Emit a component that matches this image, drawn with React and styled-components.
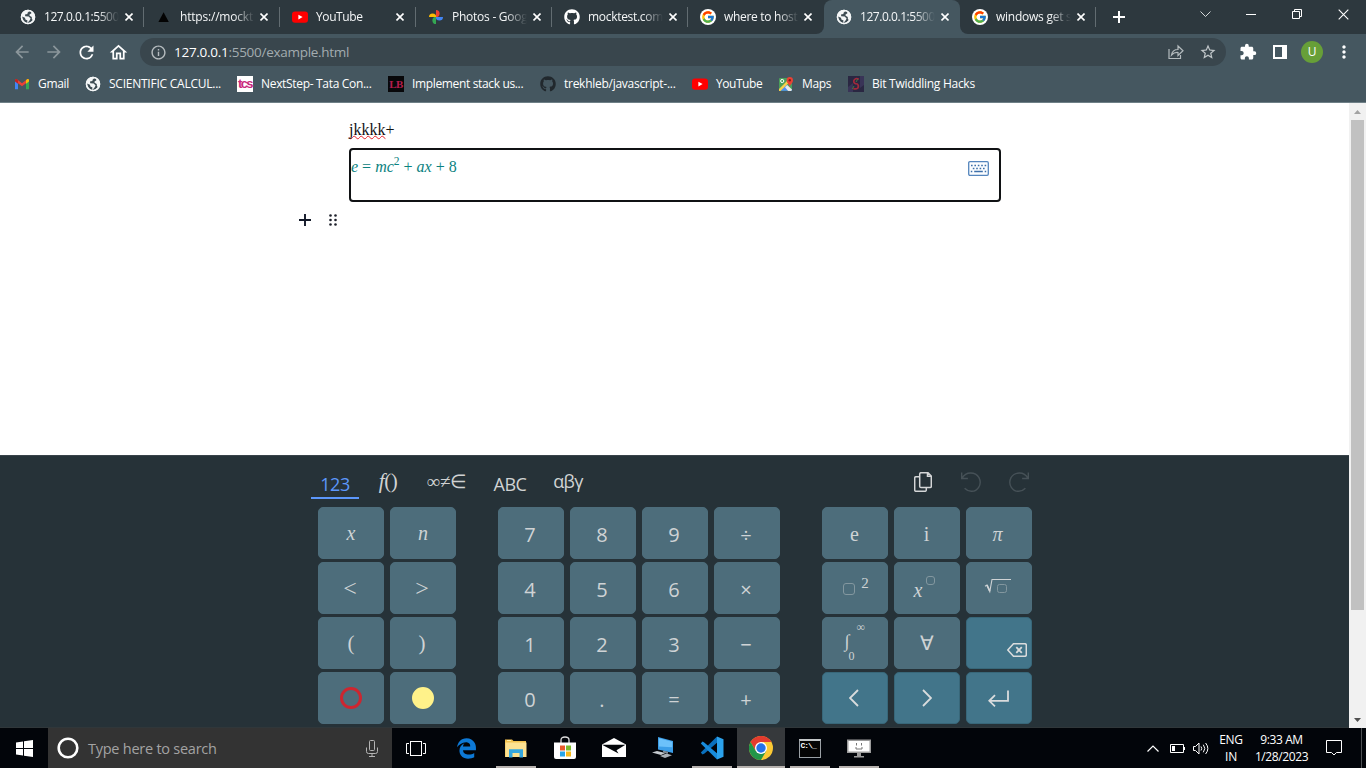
import React from "react";
import styled, { createGlobalStyle } from "styled-components";
import { FaGithub } from "react-icons/fa";
import { FaEdgeLegacy } from "react-icons/fa6";
import { FcGoogle } from "react-icons/fc";
import {
  MdArrowBack, MdArrowForward, MdRefresh, MdOutlineHome, MdInfoOutline,
  MdStarOutline, MdExtension, MdMoreVert,
} from "react-icons/md";

const ui = `"Segoe UI", "Open Sans", "Noto Sans", sans-serif`;
const serif = `"Liberation Serif", serif`;

const GlobalStyle = createGlobalStyle`
  * { box-sizing: border-box; }
  html, body { margin: 0; padding: 0; overflow: hidden; }
  body { font-family: ${ui}; background: #fff; }
  svg { display: block; flex: none; }
`;

const Screen = styled.div`
  width: 1366px;
  height: 768px;
  display: flex;
  flex-direction: column;
  overflow: hidden;
`;

/* ---------- Browser chrome ---------- */

const TabStrip = styled.div`
  height: 34px;
  flex: none;
  display: flex;
  background: #2d383e;
  padding-left: 8px;
`;

const TabSlot = styled.div`
  height: 34px;
  width: 136px;
  background: ${(p) => (p.$curve ? "#455760" : "transparent")};
`;

const TabBody = styled.div`
  display: flex;
  align-items: center;
  width: 136px;
  height: 34px;
  padding-left: 12px;
  background: ${(p) => (p.$active ? "#455760" : "#2d383e")};
  border-radius: ${(p) => p.$radius || "0"};
`;

const FavSlot = styled.div`
  width: 16px;
  height: 16px;
  flex: none;
  display: flex;
  align-items: center;
  justify-content: center;
`;

const TabTitle = styled.div`
  width: 75px;
  margin-left: 8px;
  white-space: nowrap;
  font-size: 12px;
  line-height: 18px;
  letter-spacing: ${(p) => p.$ls || 0}px;
  color: #f4f6f7;
  mask-image: linear-gradient(to right, #000 54px, transparent 75px);
`;

const TabClose = styled.div`
  width: 16px;
  margin-left: 2px;
  display: flex;
  justify-content: center;
`;

const TabDivider = styled.div`
  width: 1px;
  height: 20px;
  margin-left: 7px;
  background: ${(p) => (p.$hidden ? "transparent" : "#626c71")};
`;

const NewTab = styled.div`
  width: 46px;
  display: flex;
  align-items: center;
  justify-content: center;
`;

const WindowButtons = styled.div`
  margin-left: auto;
  display: flex;
  height: 28px;
`;

const WindowButton = styled.div`
  width: 46px;
  display: flex;
  align-items: center;
  justify-content: center;
`;

const Toolbar = styled.div`
  height: 36px;
  flex: none;
  display: flex;
  align-items: center;
  background: #455760;
  padding-left: 6px;
`;

const ToolButton = styled.div`
  width: 32px;
  display: flex;
  justify-content: center;
  color: ${(p) => (p.$dim ? "#8b969b" : "#fff")};
`;

const Omnibox = styled.div`
  width: 1086px;
  height: 28px;
  margin: 0 6px;
  padding: 0 10px;
  border-radius: 14px;
  background: #39464d;
  display: flex;
  align-items: center;
  color: #b6bcbf;
`;

const Url = styled.div`
  flex: 1;
  margin-left: 7px;
  font-size: 13.5px;
  line-height: 20px;
  letter-spacing: -0.28px;
  color: #a3acb0;
  b { font-weight: 400; color: #fff; }
`;

const OmniAction = styled.div`
  width: 32px;
  display: flex;
  justify-content: center;
  color: #c1c7ca;
  &:last-child { margin-right: -8px; }
`;

const Avatar = styled.div`
  width: 22px;
  height: 22px;
  border-radius: 50%;
  background: #679f38;
  color: #fff;
  font: 12px/22px ${ui};
  text-align: center;
`;

const Bookmarks = styled.div`
  height: 33px;
  flex: none;
  display: flex;
  background: #455760;
  border-bottom: 1px solid #6f8087;
  padding: 5px 0 0 14px;
`;

const Bookmark = styled.div`
  display: flex;
  align-items: center;
  height: 18px;
  width: ${(p) => p.$w}px;
  gap: 8px;
  font-size: 12px;
  line-height: 18px;
  white-space: nowrap;
  letter-spacing: ${(p) => p.$ls}px;
  color: #fff;
`;

const BadgeIcon = styled.div`
  width: 16px;
  height: 16px;
  background: ${(p) => p.$bg};
  color: ${(p) => p.$fg};
  font: ${(p) => p.$font};
  letter-spacing: ${(p) => p.$ls || 0}px;
  text-align: center;
`;

/* ---------- Page ---------- */

const Viewport = styled.div`
  height: 625px;
  flex: none;
  display: flex;
  background: #fff;
`;

const PageColumn = styled.div`
  width: 1349px;
  display: flex;
  flex-direction: column;
`;

const Editor = styled.div`
  height: 352px;
  padding: 17px 0 0 349px;
  font-family: ${serif};
`;

const Paragraph = styled.div`
  height: 28px;
  font-size: 16px;
  line-height: 20px;
  color: #111;
  span {
    text-decoration: underline wavy #e8222a 1px;
    text-underline-offset: 0;
    text-decoration-skip-ink: none;
  }
`;

const MathBox = styled.div`
  width: 652px;
  height: 54px;
  border: 2px solid #101214;
  border-radius: 4px;
  display: flex;
  justify-content: space-between;
  padding: 7px 10px 0 0;
  color: #0b8280;
  font-size: 16px;
  line-height: 20px;
`;

const Formula = styled.div`
  white-space: pre;
  sup { font-size: 11.5px; line-height: 0; vertical-align: 7px; }
`;

const BlockTools = styled.div`
  display: flex;
  align-items: center;
  gap: 18px;
  margin: 12px 0 0 -50px;
`;

const Scrollbar = styled.div`
  width: 17px;
  background: #f1f1f1;
  display: flex;
  flex-direction: column;
  align-items: center;
`;

const ScrollArrow = styled.div`
  height: 17px;
  display: flex;
  align-items: center;
`;

const ScrollThumb = styled.div`
  width: 13px;
  height: 490px;
  margin-bottom: auto;
  background: #c1c1c1;
`;

/* ---------- Math keyboard ---------- */

const Keyboard = styled.div`
  height: 273px;
  background: #263238;
  border-top: 1px solid #39434a;
  border-bottom: 1px solid #30373a;
  padding: 0 0 0 311px;
`;

const LayerBar = styled.div`
  display: flex;
  height: 43px;
  margin-bottom: 8px;
`;

const Layer = styled.div`
  width: ${(p) => p.$w}px;
  height: 43px;
  padding-top: ${(p) => p.$top}px;
  margin-right: ${(p) => p.$gap || 0}px;
  font-family: ${(p) => p.$font || ui};
  font-size: ${(p) => p.$size}px;
  line-height: 22px;
  letter-spacing: ${(p) => p.$ls || 0}px;
  white-space: nowrap;
  text-align: center;
  color: ${(p) => (p.$on ? "#5c97fb" : "#d0d2d3")};
  border-bottom: 2px solid ${(p) => (p.$on ? "#5c97fb" : "transparent")};
`;

const EditActions = styled.div`
  display: flex;
  margin-left: auto;
  margin-right: 306px;
  padding-top: 16px;
`;

const EditAction = styled.div`
  width: 48px;
  display: flex;
  justify-content: center;
`;

const KeyGroups = styled.div`
  display: flex;
  gap: 42px;
  padding-left: 7px;
`;

const KeyGrid = styled.div`
  display: grid;
  grid-template-columns: repeat(${(p) => p.$cols}, 66px);
  grid-auto-rows: 52px;
  gap: 3px 6px;
`;

const Key = styled.div`
  display: flex;
  align-items: center;
  justify-content: center;
  border-radius: 5px;
  background: ${(p) => (p.$action ? "#42758a" : "#4d6d7b")};
  border: 1px solid ${(p) => (p.$action ? "#386779" : "#4d6d7b")};
  color: #cfd3d5;
  font-family: ${(p) => (p.$serif ? serif : ui)};
  font-style: ${(p) => (p.$italic ? "italic" : "normal")};
  font-size: ${(p) => p.$size || 20}px;
  line-height: 24px;
  padding-top: ${(p) => p.$down || 0}px;
  padding-bottom: ${(p) => p.$up || 0}px;
  padding-right: ${(p) => p.$back || 0}px;
`;

const Placeholder = styled.span`
  display: block;
  width: ${(p) => p.$s}px;
  height: ${(p) => p.$s}px;
  border: 1px solid #83979f;
  border-radius: 3px;
`;

const Power = styled.div`
  display: flex;
  align-items: flex-end;
  gap: ${(p) => p.$gap}px;
  height: ${(p) => p.$h}px;
  margin-bottom: ${(p) => p.$mb}px;
  margin-left: ${(p) => p.$ml}px;
`;

const Exponent = styled.span`
  align-self: flex-start;
  font-size: 15px;
  line-height: 14px;
`;

const Base = styled.span`
  line-height: 18px;
`;

const Integral = styled.div`
  display: grid;
  grid-template-columns: 12px 12px;
  grid-template-rows: 12px 17px 12px;
  margin: 0 0 1px 3px;
`;

const IntPart = styled.span`
  grid-area: ${(p) => p.$area};
  padding-left: ${(p) => p.$in || 0}px;
  font-size: ${(p) => p.$size || 12}px;
  line-height: ${(p) => p.$lh || 11}px;
`;

const Dot = styled.div`
  width: 22px;
  height: 22px;
  border-radius: 50%;
  border: 3px solid ${(p) => p.$ring};
  background: ${(p) => p.$fill};
`;

/* ---------- Taskbar ---------- */

const Taskbar = styled.div`
  height: 40px;
  flex: none;
  display: flex;
  background: #02050a;
`;

const StartButton = styled.div`
  width: 48px;
  display: flex;
  align-items: center;
  justify-content: center;
`;

const SearchBox = styled.div`
  width: 344px;
  background: #333;
  display: flex;
  align-items: center;
  padding: 0 14px 0 9px;
  color: #a3a3a3;
  font-size: 14.5px;
  letter-spacing: -0.25px;
`;

const SearchHint = styled.div`
  flex: 1;
  margin-left: 9px;
`;

const AppSlot = styled.div`
  width: ${(p) => p.$w || 49}px;
  height: 40px;
  display: flex;
  flex-direction: column;
  align-items: center;
`;

const AppTile = styled.div`
  width: 48px;
  height: 38px;
  display: flex;
  align-items: center;
  justify-content: center;
  padding-top: 2px;
  background: ${(p) => (p.$active ? "#36393c" : "transparent")};
`;

const AppLine = styled.div`
  width: ${(p) => (p.$active ? 48 : 40)}px;
  height: 2px;
  background: ${(p) => (p.$running ? "#b7b2af" : "transparent")};
`;

const Tray = styled.div`
  margin-left: auto;
  display: flex;
  align-items: center;
  color: #fff;
`;

const TrayIcon = styled.div`
  width: ${(p) => p.$w}px;
  display: flex;
  justify-content: center;
`;

const TrayText = styled.div`
  width: ${(p) => p.$w}px;
  text-align: center;
  font-size: 12px;
  line-height: 17px;
  letter-spacing: ${(p) => p.$ls}px;
  white-space: nowrap;
`;

const ShowDesktop = styled.div`
  width: 5px;
  height: 40px;
  margin-left: 8px;
  border-left: 1px solid #4d5053;
`;

/* ---------- Drawings ---------- */

const Globe = () => (
  <svg width="16" height="16" viewBox="0 0 16 16">
    <circle cx="8" cy="8" r="7.2" fill="#f4f6f7" />
    <path d="M9.2 2.2 7.6 3.7 7.4 5 5 5.6 5.2 7.2 8.7 7.4 10.6 9.4 9.7 11.2 7.9 13.6 7 13.7 7.5 11.4 5.4 10.5 5 8.8 2 7.4 2.5 9.6 4 12.3 6.8 13.9 10 13.5 12.7 11.2 11.8 9.6 11.8 7.9 9.6 6.7 9.5 5.4 11.4 4.3 11.1 2.7Z" fill="#34424a" fillRule="evenodd" opacity=".95" />
    <circle cx="8" cy="8" r="6.6" fill="none" stroke="#f4f6f7" strokeWidth="1.4" />
  </svg>
);

const YouTubeIcon = () => (
  <svg width="16" height="16" viewBox="0 0 16 16">
    <rect x="0" y="2.5" width="16" height="11.3" rx="3" fill="#f00" />
    <path d="M6.4 5.7v4.8l4.2-2.4z" fill="#fff" />
  </svg>
);

const PhotosIcon = () => (
  <svg width="16" height="16" viewBox="0 0 16 16">
    <path d="M8 1a3.6 3.6 0 0 1 0 7.2z" fill="#ea4335" />
    <path d="M15 8a3.6 3.6 0 0 1-7.2 0z" fill="#4285f4" />
    <path d="M8 15a3.6 3.6 0 0 1 0-7.2z" fill="#34a853" />
    <path d="M1 8a3.6 3.6 0 0 1 7.2 0z" fill="#fbbc04" />
  </svg>
);

const Triangle = () => (
  <svg width="16" height="16" viewBox="0 0 16 16"><path d="M7.6 3.3 12.8 13H2.4z" fill="#030303" /></svg>
);

const GoogleDisc = styled.div`
  width: 16px;
  height: 16px;
  border-radius: 50%;
  background: #fff;
  display: flex;
  align-items: center;
  justify-content: center;
`;

const GoogleIcon = () => (<GoogleDisc><FcGoogle size={14} /></GoogleDisc>);

const GmailIcon = () => (
  <svg width="16" height="16" viewBox="0 0 16 16">
    <path d="M1 4v9.2h3V7z" fill="#4285f4" />
    <path d="M12 7v6.2h3V4z" fill="#34a853" />
    <path d="M1 3.8 2.5 2.9 8 7.2l5.5-4.3L15 3.8 12 7.2 8 10.3 4 7.2z" fill="#ea4335" />
    <path d="M12 4.2 13.4 3Q15 2.6 15 4.3v1.2l-3 2.3z" fill="#fbbc04" />
    <path d="M1 4.3Q1.2 2.5 2.7 3.1L4 4.2v3.6L1 5.5z" fill="#c5221f" />
  </svg>
);

const MapsIcon = () => (
  <svg width="16" height="16" viewBox="0 0 16 16">
    <rect x="1" y="2" width="13" height="13" rx="1" fill="#4b9f5b" />
    <path d="M1.5 14.8 8 8l6.2 6.8z" fill="#4e8df5" />
    <path d="M1 13 11 3l2.4 1.2L2.5 15H1z" fill="#f6d04b" />
    <path d="m9.2 8.900 4.8 4.600-.8 1.500h-3L7 11.200z" fill="#e8e8e8" />
    <circle cx="4.2" cy="5" r="1.6" fill="none" stroke="#fff" />
    <path d="M11.8 11C11.5 8.500 8.600 7.200 8.600 4.300a3.200 3.200 0 0 1 6.400 0c0 2.900-2.900 4.200-3.200 6.700z" fill="#e94235" />
    <circle cx="11.8" cy="4.2" r="1.2" fill="#8b1a14" />
  </svg>
);

const HacksIcon = () => (
  <svg width="16" height="16" viewBox="0 0 16 16">
    <rect width="16" height="16" fill="#2a2742" />
    <path d="M0 11 5 7v9H0zM12 0h4v9l-4 3z" fill="#393457" />
    <path d="M10.800 3.200Q7 1.500 5.800 4.800q-.4 3 3.600 3.200 1.800 1.700.4 4.100-2 1.600-4.500.3" stroke="#a02a3c" strokeWidth="1.700" fill="none" />
    <path d="m6 10-1.600 3M9.800 3 8 6" stroke="#46783f" />
  </svg>
);

const Cross = ({ s = 8, w = 1.6 }) => (
  <svg width={s} height={s} viewBox="0 0 8 8"><path d="m.5.5 7 7m0-7-7 7" stroke="#fff" strokeWidth={w} /></svg>
);

const KeyboardIcon = () => (
  <svg width="21" height="19" viewBox="0 -4 21 19">
    <rect x=".7" y=".7" width="19.6" height="13.6" rx="1.2" fill="#fbfdff" stroke="#5485bd" strokeWidth="1.3" />
    <path d="M3 4.500h15.600M4.800 7.500h12.200" stroke="#3d6fa9" strokeWidth="1.700" strokeDasharray="1.6 1.8" />
    <path d="M2.800 10.500h1.500M6.200 10.500h8.600M16.700 10.500h1.500" stroke="#3d6fa9" strokeWidth="1.300" />
  </svg>
);

const Undo = ({ flip }) => (
  <svg width="20" height="20" viewBox="0 0 20 20">
    <g transform={flip ? "translate(20 0) scale(-1 1)" : undefined} fill="none" stroke="#465157" strokeWidth="1.4">
      <path d="M.7.5v6h6.2M1 6.300C5-1 14.500-.2 18 5.600 21.700 13 16 19.500 10.300 19.300 7.400 19.200 5.200 18 3.600 16.300" />
    </g>
  </svg>
);

const CopyIcon = () => (
  <svg width="18" height="20" viewBox="0 0 18 20" fill="none" stroke="#d4d6d7" strokeWidth="1.5">
    <path d="M5 4.700H2Q.7 4.700.7 6v12q0 1.300 1.300 1.300h9q1.300 0 1.300-1.300v-2" />
    <path d="M7 .7h7l3.300 3.300v10.300q0 1.300-1.300 1.300H7q-1.300 0-1.300-1.300V2Q5.700.7 7 .7zM13.500.7v3.600h3.800" />
  </svg>
);

const Chevron = ({ flip }) => (
  <svg width="10" height="18" viewBox="0 0 10 18"><path d={flip ? "m1 1 8 8-8 8" : "M9 1 1 9l8 8"} fill="none" stroke="#dadcdd" strokeWidth="1.8" /></svg>
);

const ReturnIcon = () => (
  <svg width="21" height="17" viewBox="0 0 21 17"><path d="M20 .5v10.300H1.500M7 5.200 1.300 10.800 7 16.300" fill="none" stroke="#dadcdd" strokeWidth="1.8" /></svg>
);

const BackspaceSlot = styled.div`
  width: 66px;
  display: flex;
  justify-content: flex-end;
  padding: 14px 4px 0 0;
`;

const BackspaceIcon = () => (
  <svg width="20" height="14" viewBox="0 0 20 14" fill="none" stroke="#dadcdd" strokeWidth="1.5">
    <path d="M6.500.7H17.800Q19.300.7 19.300 2.200v9.600q0 1.500-1.500 1.500H6.500L.8 7z" />
    <path d="m9.300 4.200 5.500 5.600m0-5.600-5.500 5.600" strokeWidth="1.800" />
  </svg>
);

const SqrtIcon = () => (
  <svg width="28" height="16" viewBox="0 0 28 16" fill="none" stroke="#cfd3d5">
    <path d="M1 8.200 3 7l2.800 6.500L8 1.500h19" strokeWidth="1.100" />
    <path d="M3 7.200 5.700 13" strokeWidth="1.700" />
    <rect x="13.500" y="6.500" width="9" height="8" rx="2" stroke="#83979f" />
  </svg>
);

const WindowsLogo = () => (
  <svg width="17" height="17" viewBox="0 0 17 17" fill="#fff">
    <path d="M0 2.400 7 1.400V8H0zM8 1.200 17 0v8H8zM0 9h7v6.500L0 14.500zM8 9h9v8l-9-1.200z" />
  </svg>
);

const Mic = () => (
  <svg width="12" height="17" viewBox="0 0 12 17" fill="none" stroke="#b4b4b4">
    <rect x="3.500" y=".5" width="5" height="10" rx="1" />
    <path d="M.5 7.500v4q0 2 2 2h7q2 0 2-2v-4M6 13.500v3M3 16.500h6" />
  </svg>
);

const TaskViewIcon = () => (
  <svg width="22" height="15" viewBox="0 0 22 15" fill="none" stroke="#fff">
    <rect x="4.500" y=".5" width="11" height="14" /><path d="M3 2.500H.5v10H3M17 2.500h2.500v10H17" />
  </svg>
);

const FolderIcon = () => (
  <svg width="22" height="19" viewBox="0 0 22 19">
    <path d="M0 .5h7l1.500 1.600H21v16H0z" fill="#f3c24f" />
    <path d="M.5 3.500H21.500V18H.5z" fill="#fde292" />
    <path d="M2 1.500h4" stroke="#fff0a8" />
    <path d="M4 18.500v-8.300h14v8.300h-3.500V14h-7v4.500z" fill="#35a8e0" />
  </svg>
);

const StoreIcon = () => (
  <svg width="24" height="24" viewBox="0 0 24 24">
    <path d="M8 7V4q0-3 4-3t4 3v3" stroke="#ddd" strokeWidth="1.300" fill="none" />
    <path d="M1 6.500h22V21q0 2-2 2H3q-2 0-2-2z" fill="#fff" />
    <path d="M7 9.500h5v5H7z" fill="#e95a2b" /><path d="M13 9.500h5v5h-5z" fill="#7dba2c" />
    <path d="M7 15.500h5v5H7z" fill="#29a5e8" /><path d="M13 15.500h5v5h-5z" fill="#f7b91b" />
  </svg>
);

const MailIcon = () => (
  <svg width="24" height="20" viewBox="0 0 24 20">
    <path d="M0 6.500 12 0l12 6.500V19H0z" fill="#fff" />
    <path d="M0 6.700 23.500 6.700 14.500 12.200 16.500 15.500z" fill="#03060a" />
  </svg>
);

const PcIcon = () => (
  <svg width="24" height="22" viewBox="0 0 24 22">
    <path d="M7 0 22 4V16L7 12.500z" fill="#3b9ee8" /><path d="M8 1.200 21.200 4.700v5.600L8 9.500z" fill="#6cc1fa" />
    <path d="m1 15.500 5-1.600 8.500 2.200-4.500 2z" fill="#c6cbcf" /><path d="m9 19 6.500-2.500 5.500 1.800-7 2.700z" fill="#a9b0b6" />
    <path d="m12 13.500 5 1.200v2l-5-1.200z" fill="#7f8c96" />
  </svg>
);

const CodeIcon = () => (
  <svg width="24" height="24" viewBox="0 0 24 24">
    <path d="M17 .5 23.500 3.300v17.400L17 23.500z" fill="#2ba2ec" />
    <path d="M17 .5v6.300L4.500 17.500 2.500 18.500.8 16.500z" fill="#0a70bd" />
    <path d="M17 23.500v-6.300L4.200 6.500 2.500 5.600.8 7.500z" fill="#188cdc" />
  </svg>
);

const ChromeIcon = () => (
  <svg width="24" height="24" viewBox="0 0 24 24">
    <circle cx="12" cy="12" r="12" fill="#fcc934" />
    <path d="M1.600 6A12 12 0 0 1 22.400 6H12L6.800 15z" fill="#e33b2e" />
    <path d="M1.600 6A12 12 0 0 0 12 24l5.200-9H6.800z" fill="#229648" />
    <circle cx="12" cy="12" r="6" fill="#fff" /><circle cx="12" cy="12" r="4.700" fill="#2672e8" />
  </svg>
);

const CmdFrame = styled.div`
  width: 22px;
  height: 19px;
  border: 1px solid #9ba1a5;
  border-top: 2px solid #c4c8ca;
  background: #050505;
  color: #fff;
  font: bold 8px/9px "Liberation Mono", monospace;
  letter-spacing: -1px;
  padding-left: 1px;
`;

const MonitorIcon = () => (
  <svg width="24" height="19" viewBox="0 0 24 19">
    <path d="M0 .5h24V14H0zM10 14h4v3h3v1.500H7V17h3z" fill="#9b9b9b" />
    <path d="M1.500 2h21v10.500h-21z" fill="#fff" />
    <path d="M9.500 4v2.500M14.500 4v2.500M9 8v2h6V8" stroke="#777" fill="none" />
  </svg>
);

/* ---------- Data ---------- */

const tabs = [
  { icon: <Globe />, title: "127.0.0.1:5500", ls: -0.45 },
  { icon: <Triangle />, title: "https://mockt", ls: -0.2 },
  { icon: <YouTubeIcon />, title: "YouTube", ls: -0.4 },
  { icon: <PhotosIcon />, title: "Photos - Goog", ls: -0.25 },
  { icon: <FaGithub size={16} color="#fff" />, title: "mocktest.com", ls: -0.3 },
  { icon: <GoogleIcon />, title: "where to host", ls: -0.3, radius: "0 0 8px 0", curve: true, noDivider: true },
  { icon: <Globe />, title: "127.0.0.1:5500", ls: -0.45, active: true, radius: "8px 8px 0 0", noDivider: true },
  { icon: <GoogleIcon />, title: "windows get s", ls: -0.25, radius: "0 0 0 8px", curve: true },
];

const bookmarks = [
  { icon: <GmailIcon />, label: "Gmail", w: 71, ls: -0.3 },
  { icon: <Globe />, label: "SCIENTIFIC CALCUL...", w: 152, ls: -0.24 },
  { icon: <BadgeIcon $bg="#fff" $fg="#c9287c" $font='bold 13px/15px "Liberation Sans", sans-serif' $ls={-1.6}>tcs</BadgeIcon>, label: "NextStep- Tata Con...", w: 151, ls: -0.32 },
  { icon: <BadgeIcon $bg="#08080a" $fg="#b51d4d" $font='bold 11px/17px "Liberation Serif", serif' $ls={-0.5}>LB</BadgeIcon>, label: "Implement stack us...", w: 152, ls: -0.35 },
  { icon: <FaGithub size={16} color="#21282d" />, label: "trekhleb/javascript-...", w: 152, ls: -0.27 },
  { icon: <YouTubeIcon />, label: "YouTube", w: 86, ls: -0.45 },
  { icon: <MapsIcon />, label: "Maps", w: 70, ls: -0.35 },
  { icon: <HacksIcon />, label: "Bit Twiddling Hacks", w: 140, ls: -0.28 },
];

const leftKeys = [
  { t: "x", serif: 1, italic: 1, up: 1 }, { t: "n", serif: 1, italic: 1, up: 1 },
  { t: "<", serif: 1, size: 24, back: 2 }, { t: ">", serif: 1, size: 24, back: 2 },
  { t: "(", serif: 1, size: 21, up: 1 }, { t: ")", serif: 1, size: 21, up: 1, back: 2 },
  { t: <Dot $ring="#cd2630" $fill="transparent" /> }, { t: <Dot $ring="#fff28a" $fill="#fff28a" /> },
];

const digitKeys = ["7", "8", "9", "÷", "4", "5", "6", "×", "1", "2", "3", "−", "0", ".", "=", "+"];

const rightKeys = [
  { t: "e", serif: 1, down: 2, back: 1 }, { t: "i", serif: 1, down: 2, back: 1 }, { t: "π", serif: 1, italic: 1, down: 2, back: 3 },
  { t: (<Power $gap={6} $h={19} $mb={0} $ml={2}><Placeholder $s={12} /><Exponent>2</Exponent></Power>), serif: 1, up: 6 },
  { t: (<Power $gap={4} $h={23} $mb={0} $ml={-5}><Base><i>x</i></Base><Exponent><Placeholder $s={9} /></Exponent></Power>), serif: 1, up: 1 },
  { t: <SqrtIcon />, up: 5, back: 2 },
  {
    t: (
      <Integral>
        <IntPart $area="1 / 2">∞</IntPart>
        <IntPart $area="2 / 1" $size={18} $lh={15}>∫</IntPart>
        <IntPart $area="3 / 1" $in={4}>0</IntPart>
      </Integral>
    ),
    serif: 1,
  },
  { t: "∀", serif: 1, back: 1 },
  { t: <BackspaceSlot><BackspaceIcon /></BackspaceSlot>, action: 1 },
  { t: <Chevron />, action: 1, back: 2 }, { t: <Chevron flip />, action: 1 }, { t: <ReturnIcon />, action: 1, back: 2 },
];

const apps = [
  { icon: <TaskViewIcon />, w: 50 },
  { icon: <FaEdgeLegacy size={21} color="#0d79d6" /> },
  { icon: <FolderIcon />, running: true },
  { icon: <StoreIcon /> },
  { icon: <MailIcon /> },
  { icon: <PcIcon /> },
  { icon: <CodeIcon />, running: true },
  { icon: <ChromeIcon />, running: true, active: true },
  { icon: <CmdFrame>C:\_</CmdFrame>, running: true },
  { icon: <MonitorIcon />, running: true },
];

const KeyButton = ({ k }) => (
  <Key $serif={k.serif} $italic={k.italic} $size={k.size} $up={k.up} $down={k.down} $back={k.back} $action={k.action}>{k.t}</Key>
);

export default function App() {
  return (
    <Screen>
      <GlobalStyle />
      <TabStrip>
        {tabs.map((t, i) => (
          <TabSlot key={i} $curve={t.curve}>
            <TabBody $active={t.active} $radius={t.radius}>
              <FavSlot>{t.icon}</FavSlot>
              <TabTitle $ls={t.ls}>{t.title}</TabTitle>
              <TabClose><Cross /></TabClose>
              <TabDivider $hidden={t.noDivider} />
            </TabBody>
          </TabSlot>
        ))}
        <NewTab><svg width="12" height="12" viewBox="0 0 12 12"><path d="M6 0v12M0 6h12" stroke="#fff" strokeWidth="2" /></svg></NewTab>
        <WindowButtons>
          <WindowButton><svg width="11" height="6" viewBox="0 0 11 6"><path d="m.5.5 5 5 5-5" stroke="#d5d8da" fill="none" /></svg></WindowButton>
          <WindowButton><svg width="10" height="1"><rect width="10" height="1" fill="#fff" /></svg></WindowButton>
          <WindowButton><svg width="10" height="10" viewBox="0 0 10 10" fill="none" stroke="#fff"><path d="M.5 2.500h7v7h-7zM2.500 2.500v-2h7v7h-2" /></svg></WindowButton>
          <WindowButton><Cross s={11} w={0.8} /></WindowButton>
        </WindowButtons>
      </TabStrip>

      <Toolbar>
        <ToolButton $dim><MdArrowBack size={20} /></ToolButton>
        <ToolButton $dim><MdArrowForward size={20} /></ToolButton>
        <ToolButton><MdRefresh size={21} /></ToolButton>
        <ToolButton><MdOutlineHome size={21} /></ToolButton>
        <Omnibox>
          <MdInfoOutline size={17} />
          <Url><b>127.0.0.1</b>:5500/example.html</Url>
          <OmniAction>
            <svg width="16" height="16" viewBox="0 0 16 16" fill="none" stroke="#b4bbbe" strokeWidth="1.200">
              <path d="M1 5v9.500h11.500V11" /><path d="M3.500 11Q4.500 5.500 10 5.500V2l5 4.800-5 4.700V8.500Q6 8.200 3.500 11z" />
            </svg>
          </OmniAction>
          <OmniAction><MdStarOutline size={18} /></OmniAction>
        </Omnibox>
        <ToolButton><MdExtension size={18} /></ToolButton>
        <ToolButton><svg width="14" height="14" viewBox="0 0 14 14"><path d="M1 1h12v12H1z" fill="none" stroke="#fff" strokeWidth="2" /><path d="M9 1h4v12H9z" fill="#fff" /></svg></ToolButton>
        <ToolButton><Avatar>U</Avatar></ToolButton>
        <ToolButton><MdMoreVert size={20} /></ToolButton>
      </Toolbar>

      <Bookmarks>
        {bookmarks.map((b, i) => (
          <Bookmark key={i} $w={b.w} $ls={b.ls}><FavSlot>{b.icon}</FavSlot>{b.label}</Bookmark>
        ))}
      </Bookmarks>

      <Viewport>
        <PageColumn>
          <Editor>
            <Paragraph><span>jkkkk</span>+</Paragraph>
            <MathBox>
              <Formula><i>e</i> = <i>mc</i><sup>2</sup> + <i>ax</i> + 8</Formula>
              <KeyboardIcon />
            </MathBox>
            <BlockTools>
              <svg width="12" height="12" viewBox="0 0 12 12"><path d="M6 0v12M0 6h12" stroke="#111827" strokeWidth="1.900" /></svg>
              <svg width="8" height="12" viewBox="0 0 8 12" fill="#1d202b">
                {[1.5, 6.5].map((x) => [1.5, 6, 10.5].map((y) => <circle key={`${x}-${y}`} cx={x} cy={y} r="1.300" />))}
              </svg>
            </BlockTools>
          </Editor>
          <Keyboard>
            <LayerBar>
              <Layer $on $w={48} $top={17} $size={18} $gap={14} $ls={-0.5}>123</Layer>
              <Layer $w={30} $top={14} $size={21} $gap={18} $font={serif} $ls={-0.5}><i>f</i>()</Layer>
              <Layer $w={52} $top={15} $size={19} $gap={16} $font={serif}>∞≠∈</Layer>
              <Layer $w={42} $top={17} $size={18} $gap={16} $ls={-0.5}>ABC</Layer>
              <Layer $w={42} $top={14} $size={18} $ls={-0.7}>αβγ</Layer>
              <EditActions>
                <EditAction><CopyIcon /></EditAction>
                <EditAction><Undo /></EditAction>
                <EditAction><Undo flip /></EditAction>
              </EditActions>
            </LayerBar>
            <KeyGroups>
              <KeyGrid $cols={2}>{leftKeys.map((k, i) => <KeyButton key={i} k={k} />)}</KeyGrid>
              <KeyGrid $cols={4}>{digitKeys.map((d) => <Key key={d} $down={4} $back={2}>{d}</Key>)}</KeyGrid>
              <KeyGrid $cols={3}>{rightKeys.map((k, i) => <KeyButton key={i} k={k} />)}</KeyGrid>
            </KeyGroups>
          </Keyboard>
        </PageColumn>
        <Scrollbar>
          <ScrollArrow><svg width="7" height="4" viewBox="0 0 7 4"><path d="M0 4 3.500 0 7 4z" fill="#a3a3a3" /></svg></ScrollArrow>
          <ScrollThumb />
          <ScrollArrow><svg width="7" height="4" viewBox="0 0 7 4"><path d="m0 0 3.500 4L7 0z" fill="#505050" /></svg></ScrollArrow>
        </Scrollbar>
      </Viewport>

      <Taskbar>
        <StartButton><WindowsLogo /></StartButton>
        <SearchBox>
          <svg width="22" height="22" viewBox="0 0 22 22"><circle cx="11" cy="11" r="9.300" fill="none" stroke="#fff" strokeWidth="2.600" /></svg>
          <SearchHint>Type here to search</SearchHint>
          <Mic />
        </SearchBox>
        {apps.map((a, i) => (
          <AppSlot key={i} $w={a.w}>
            <AppTile $active={a.active}>{a.icon}</AppTile>
            <AppLine $running={a.running} $active={a.active} />
          </AppSlot>
        ))}
        <Tray>
          <TrayIcon $w={24}><svg width="12" height="7" viewBox="0 0 12 7"><path d="m.5 6.500 5.500-5.500 5.500 5.500" stroke="#fff" fill="none" strokeWidth="1.200" /></svg></TrayIcon>
          <TrayIcon $w={24}><svg width="15" height="9" viewBox="0 0 15 9"><path d="M.5.5h13v8H.5z" fill="none" stroke="#fff" /><path d="M2 2h3v5H2zM14 3h1v3h-1z" fill="#fff" /></svg></TrayIcon>
          <TrayIcon $w={24}><svg width="16" height="13" viewBox="0 0 16 13" fill="none" stroke="#fff"><path d="M.5 4.500h2L6 1v11L2.500 8.500h-2zM8 4.500q1.500 2 0 4M10.300 2.700q3 3.800 0 7.600M12.600 1q4.500 5.500 0 11" /></svg></TrayIcon>
          <TrayText $w={36} $ls={-0.25}>ENG<br />IN</TrayText>
          <TrayText $w={65} $ls={-0.4}>9:33 AM<br />1/28/2023</TrayText>
          <TrayIcon $w={39}><svg width="16" height="16" viewBox="0 0 16 16"><path d="M.5.5h15v12h-5L8 15l-2.500-2.500h-5z" fill="none" stroke="#fff" /></svg></TrayIcon>
          <ShowDesktop />
        </Tray>
      </Taskbar>
    </Screen>
  );
}
